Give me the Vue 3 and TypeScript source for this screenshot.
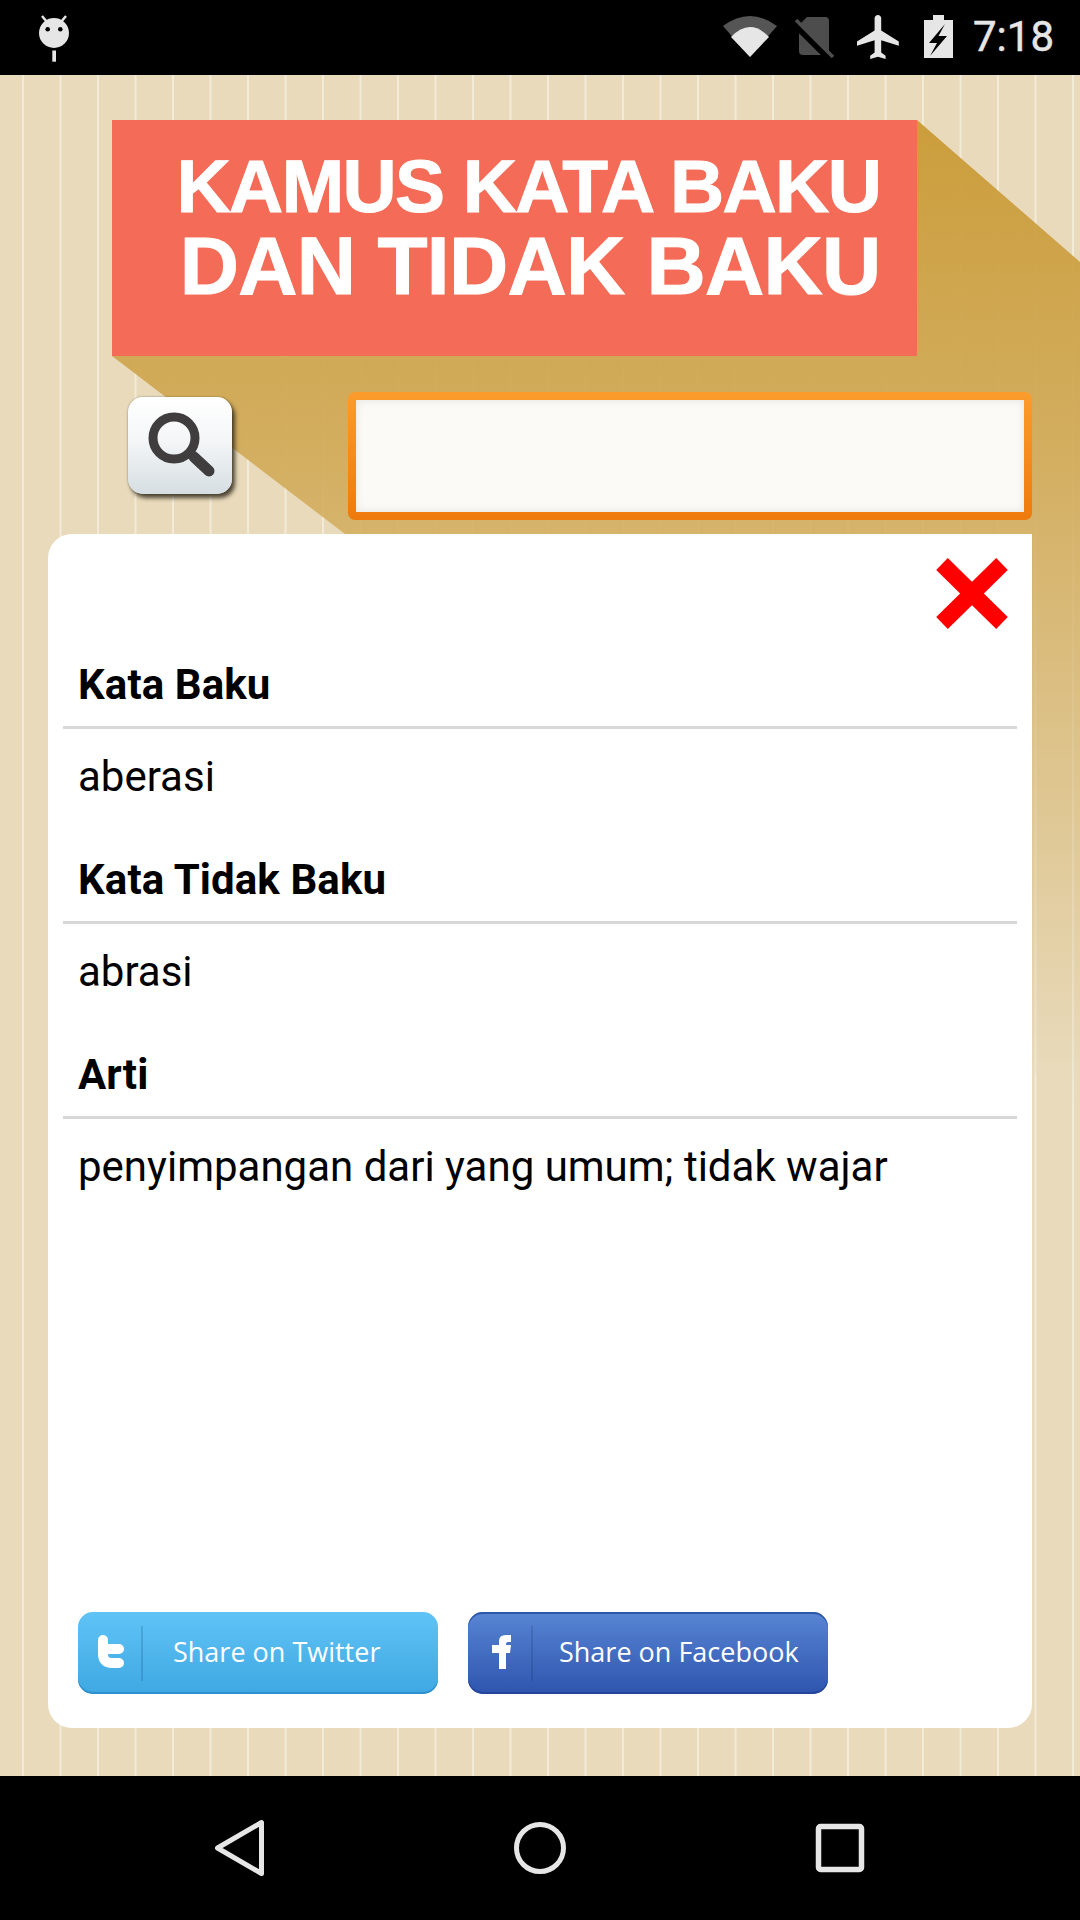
<script setup lang="ts">
interface Entry {
  label: string
  value: string
}

const entries: Entry[] = [
  { label: 'Kata Baku', value: 'aberasi' },
  { label: 'Kata Tidak Baku', value: 'abrasi' },
  { label: 'Arti', value: 'penyimpangan dari yang umum; tidak wajar' },
]
</script>

<template>
  <div class="page">
    <header class="status">
      <svg class="ghost" viewBox="36 10 36 55" width="36" height="55">
        <circle cx="54" cy="33" r="15" fill="#e6e6e6" />
        <path d="M42 16l5 6M66 16l-5 6" stroke="#e6e6e6" stroke-width="2.5" fill="none" />
        <circle cx="47.7" cy="29.3" r="2.3" fill="#000" />
        <circle cx="60.3" cy="29.3" r="2.3" fill="#000" />
        <rect x="52.3" y="50.5" width="3.7" height="11.2" fill="#e6e6e6" />
      </svg>
      <div class="status-right">
        <svg viewBox="720 0 56 75" width="56" height="75">
          <path d="M749 57L722 26Q749 6 776 26Z" fill="#555" />
          <path d="M749 57L730 37Q749 17 768 37Z" fill="#e6e6e6" />
        </svg>
        <svg viewBox="792 0 44 75" width="44" height="75">
          <path d="M806 17H824a4 4 0 0 1 4 4V51a4 4 0 0 1-4 4H802a4 4 0 0 1-4-4V25Z" fill="#4d4d4d" />
          <path d="M793 24L829 60" stroke="#000" stroke-width="6" fill="none" />
          <path d="M795 20L832 57" stroke="#4d4d4d" stroke-width="3.5" fill="none" />
        </svg>
        <svg viewBox="0 0 48 75" width="48" height="75">
          <path
            transform="translate(-0.4 10.6) scale(2.2)"
            d="M21 16v-2l-8-5V3.5c0-.83-.67-1.5-1.5-1.5S10 2.67 10 3.5V9l-8 5v2l8-2.5V19l-2 1.5V22l3.5-1 3.5 1v-1.5L13 19v-5.5l8 2.5z"
            fill="#e6e6e6"
          />
        </svg>
        <svg viewBox="916 0 40 75" width="40" height="75">
          <path d="M932 15H943V20H952V58H923V20H932Z" fill="#e6e6e6" />
          <path d="M944 24L928 43H936L929 56L946 36H937.5Z" fill="#000" />
        </svg>
        <span class="time">7:18</span>
      </div>
    </header>

    <main class="main">
      <div class="long-shadow"></div>

      <div class="banner">
        <div class="banner-top">KAMUS KATA BAKU</div>
        <div class="banner-bottom">DAN TIDAK BAKU</div>
      </div>

      <div class="search">
        <button type="button" class="search-btn" aria-label="Cari">
          <svg viewBox="0 0 104 97" width="104" height="97">
            <circle cx="46" cy="41" r="21" fill="none" stroke="#3f3d3d" stroke-width="9" />
            <path d="M66 60L81 74" stroke="#3f3d3d" stroke-width="11" stroke-linecap="round" />
          </svg>
        </button>
        <div class="search-box">
          <input class="search-input" type="text" />
        </div>
      </div>

      <section class="card">
        <div class="card-top">
          <svg viewBox="0 0 72 71" width="72" height="71">
            <path d="M6 6L66 65M66 6L6 65" stroke="#f00" stroke-width="16.5" fill="none" />
          </svg>
        </div>

        <div v-for="e in entries" :key="e.label" class="entry">
          <h2 class="entry-label">{{ e.label }}</h2>
          <p class="entry-value">{{ e.value }}</p>
        </div>

        <div class="share">
          <a class="share-btn share-btn--tw">
            <svg class="share-icon" viewBox="0 0 63 82" width="63" height="82">
              <path d="M25 28V42Q25 51 34 51H41M25 37H41" stroke="#fff" stroke-width="10" stroke-linecap="round" fill="none" />
            </svg>
            <span class="share-sep"></span>
            <span class="share-label">Share on Twitter</span>
          </a>
          <a class="share-btn share-btn--fb">
            <svg class="share-icon" viewBox="0 0 63 82" width="63" height="82">
              <path d="M31 57V41H24V33H31V29Q31 23 38 23H43V30H40Q38 30 38 32V33H43L42 41H38V57Z" fill="#fff" />
            </svg>
            <span class="share-sep"></span>
            <span class="share-label">Share on Facebook</span>
          </a>
        </div>
      </section>
    </main>

    <footer class="nav">
      <svg viewBox="0 0 60 64" width="60" height="64">
        <path d="M51.5 6.5V57.5L7.5 32Z" fill="none" stroke="#e6e6e6" stroke-width="5" stroke-linejoin="round" />
      </svg>
      <svg viewBox="0 0 60 60" width="60" height="60">
        <circle cx="30" cy="30" r="23.5" fill="none" stroke="#e6e6e6" stroke-width="5" />
      </svg>
      <svg viewBox="0 0 60 60" width="60" height="60">
        <rect x="8.5" y="8.5" width="43" height="43" rx="2" fill="none" stroke="#e6e6e6" stroke-width="5.5" />
      </svg>
    </footer>
  </div>
</template>

<style scoped>
.page {
  width: 1080px;
  height: 1920px;
  display: flex;
  flex-direction: column;
  overflow: hidden;
  font-family: Roboto, sans-serif;
}

.status {
  height: 75px;
  flex-shrink: 0;
  background: #000;
  display: flex;
  align-items: flex-start;
  justify-content: space-between;
  padding: 0 26px 0 36px;
}

.ghost {
  margin-top: 10px;
}

.status-right {
  display: flex;
  align-items: center;
  gap: 16px;
  height: 75px;
}

.time {
  color: #e6e6e6;
  font-size: 42px;
  line-height: 75px;
  margin-top: -2px;
  -webkit-text-stroke: 0.5px #e6e6e6;
}

.main {
  position: relative;
  flex: 1;
  display: flex;
  flex-direction: column;
  background-color: #e8dabb;
  background-image: linear-gradient(90deg, #e8dabb 0, #e8dabb 35.5px, #f2ebd8 35.5px, #f2ebd8 37.5px);
  background-size: 37.5px 100%;
  background-position: -13.5px 0;
}

.long-shadow {
  position: absolute;
  inset: 0;
  clip-path: polygon(917px 45px, 1080px 187px, 1080px 1035px, 345px 459px, 112px 281px);
  background: linear-gradient(
    180deg,
    rgba(202, 155, 55, 0.97) 45px,
    rgba(210, 172, 92, 0.93) 400px,
    rgba(232, 218, 187, 0.25) 1000px,
    rgba(232, 218, 187, 0) 1035px
  );
}

.banner {
  position: relative;
  width: 805px;
  height: 236px;
  margin: 45px 0 0 112px;
  box-sizing: border-box;
  padding-left: 64.5px;
  background: #f46c57;
  color: #fff;
  font-family: 'Liberation Sans', Arial, sans-serif;
  font-weight: 700;
  white-space: nowrap;
  -webkit-text-stroke: 1px #fff;
}

.banner-top {
  font-size: 75px;
  line-height: 79px;
  letter-spacing: -1.6px;
  margin-top: 27px;
}

.banner-bottom {
  font-size: 82px;
  line-height: 80px;
  letter-spacing: -0.7px;
  margin-left: 3.3px;
}

.search {
  position: relative;
  display: flex;
  align-items: flex-start;
  margin: 36px 0 0 128px;
}

.search-btn {
  width: 104px;
  height: 97px;
  margin-top: 5px;
  padding: 0;
  border: none;
  border-radius: 15px;
  background: linear-gradient(180deg, #ffffff 0%, #f4f6f7 45%, #d6dee3 100%);
  box-shadow: 3px 4px 4px rgba(50, 42, 28, 0.85), 0 0 2px rgba(50, 42, 28, 0.5);
}

.search-btn svg {
  display: block;
}

.search-box {
  width: 684px;
  height: 128px;
  margin-left: 116px;
  box-sizing: border-box;
  padding: 8px;
  border-radius: 7px;
  background: linear-gradient(180deg, #fb9c2c 0%, #ee7a0c 100%);
}

.search-input {
  display: block;
  width: 100%;
  height: 100%;
  box-sizing: border-box;
  border: none;
  outline: none;
  background: #fbfaf6;
  box-shadow: inset 0 0 8px rgba(120, 120, 120, 0.18);
}

.card {
  position: relative;
  width: 984px;
  height: 1194px;
  margin: 14px 0 0 48px;
  box-sizing: border-box;
  display: flex;
  flex-direction: column;
  padding: 24px 15px 34px;
  background: #fff;
  border-radius: 24px 0 24px 24px;
}

.card-top {
  display: flex;
  justify-content: flex-end;
  padding-right: 9px;
  height: 71px;
  margin-bottom: 27px;
}

.entry {
  height: 195px;
}

.entry-label {
  margin: 0;
  padding: 1px 15px 13px;
  font-size: 42px;
  line-height: 56px;
  font-weight: 700;
  letter-spacing: 0.1px;
  color: #000;
  border-bottom: 3px solid #d8d8d8;
}

.entry-value {
  margin: 20px 0 0;
  padding: 0 15px;
  font-size: 42px;
  line-height: 56px;
  color: #000;
}

.share {
  margin-top: auto;
  display: flex;
  gap: 30px;
  padding-left: 15px;
}

.share-btn {
  width: 360px;
  height: 82px;
  box-sizing: border-box;
  display: flex;
  align-items: center;
  border-radius: 15px;
  color: #fff;
  font-family: 'Open Sans', sans-serif;
  font-size: 27px;
}

.share-btn--tw {
  background: linear-gradient(180deg, #5fc3f6 0%, #3fa8e2 100%);
  box-shadow: inset 0 -2px 0 #2f90cd;
}

.share-btn--fb {
  background: linear-gradient(180deg, #5885d4 0%, #2f55ae 100%);
  box-shadow: inset 0 2px 0 #2f57a8, inset 0 -2px 0 #24459a;
}

.share-icon {
  flex-shrink: 0;
}

.share-sep {
  width: 2px;
  height: 55px;
  background: rgba(0, 40, 90, 0.16);
}

.share-label {
  margin: -3px 0 0 30px;
}

.share-btn--fb .share-label {
  margin-left: 26px;
}

.nav {
  height: 144px;
  flex-shrink: 0;
  background: #000;
  display: grid;
  grid-template-columns: repeat(3, 300px);
  padding: 0 90px;
  align-items: center;
  justify-items: center;
}
</style>

<style>
html,
body {
  margin: 0;
  background: #000;
}
</style>
